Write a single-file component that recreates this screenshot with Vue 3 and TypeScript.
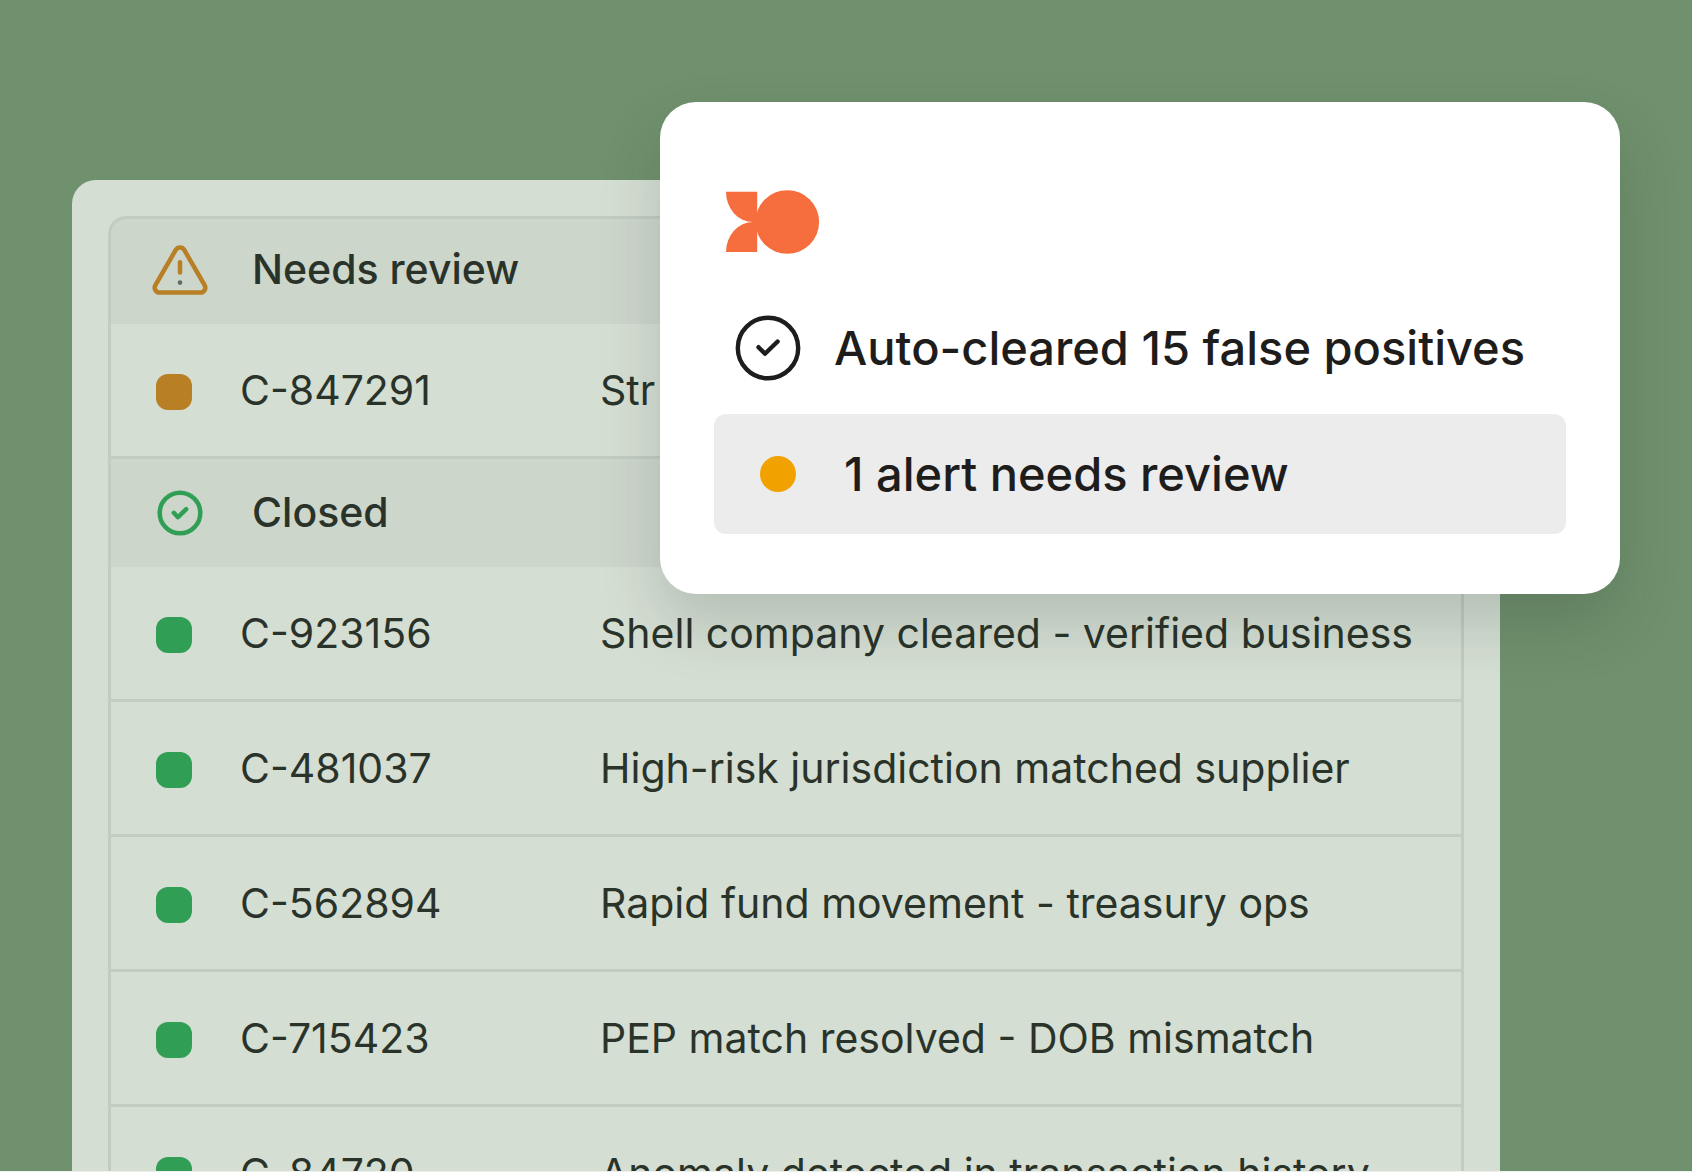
<script setup lang="ts">
type Tone = 'amber' | 'green'

interface CaseRow {
  id: string
  summary: string
}

interface CaseGroup {
  title: string
  tone: Tone
  rows: CaseRow[]
}

const groups: CaseGroup[] = [
  {
    title: 'Needs review',
    tone: 'amber',
    rows: [{ id: 'C-847291', summary: 'Str' }],
  },
  {
    title: 'Closed',
    tone: 'green',
    rows: [
      { id: 'C-923156', summary: 'Shell company cleared - verified business' },
      { id: 'C-481037', summary: 'High-risk jurisdiction matched supplier' },
      { id: 'C-562894', summary: 'Rapid fund movement - treasury ops' },
      { id: 'C-715423', summary: 'PEP match resolved - DOB mismatch' },
      { id: 'C-84720', summary: 'Anomaly detected in transaction history' },
    ],
  },
]
</script>

<template>
  <main class="stage">
    <section class="panel">
      <div class="frame">
        <table class="cases">
          <colgroup>
            <col class="col-status" />
            <col class="col-id" />
            <col />
          </colgroup>
          <tbody v-for="group in groups" :key="group.title" :class="group.tone">
            <tr class="group-row">
              <th colspan="3" scope="rowgroup">
                <div class="group-title">
                  <svg v-if="group.tone === 'amber'" class="group-icon" viewBox="0 0 60 60" aria-hidden="true">
                    <path
                      d="M25.9 9.7a4.8 4.8 0 0 1 8.2 0l20.5 35.5a4.9 4.9 0 0 1-4.2 7.4H9.6a4.9 4.9 0 0 1-4.2-7.4Z"
                    />
                    <path d="M30 22.2v10.4" />
                    <circle class="point" cx="30" cy="42.6" r="2.3" />
                  </svg>
                  <svg v-else class="group-icon" viewBox="0 0 60 60" aria-hidden="true">
                    <circle cx="30" cy="30" r="20.3" />
                    <path d="M23.8 29.8l4.2 4.4 8.2-8" />
                  </svg>
                  <span class="group-name">{{ group.title }}</span>
                </div>
              </th>
            </tr>
            <tr v-for="row in group.rows" :key="row.id" class="case-row">
              <td class="status"><span class="swatch"></span></td>
              <td>{{ row.id }}</td>
              <td>{{ row.summary }}</td>
            </tr>
          </tbody>
        </table>
      </div>
    </section>

    <aside class="card">
      <svg class="logo" viewBox="0 0 96 66" aria-hidden="true">
        <circle cx="62.3" cy="33" r="31.8" />
        <path d="M1 2.8h31.2V33H28A27 30 0 0 1 1 2.8Z" />
        <path d="M1 63h31.2V33H28A27 30 0 0 0 1 63Z" />
      </svg>
      <p class="line">
        <svg class="check" viewBox="0 0 66 66" aria-hidden="true">
          <circle cx="33" cy="33" r="30.2" />
          <path d="M23.5 32.2l6.5 6.6 12.6-12.3" />
        </svg>
        <span>Auto-cleared 15 false positives</span>
      </p>
      <p class="line alert">
        <span class="dot"></span>
        <span>1 alert needs review</span>
      </p>
    </aside>
  </main>
</template>

<style>
body {
  background: #eef0ec;
}
</style>

<style scoped>
.stage {
  position: relative;
  box-sizing: border-box;
  height: calc(100vh - 1px);
  padding: 180px 192px 0 72px;
  overflow: hidden;
  background: #70916d;
  color: #2a3329;
  font-family: Inter, "Liberation Sans", sans-serif;
}

.panel {
  padding: 36px;
  border-radius: 24px 24px 0 0;
  background: #d5ded3;
}

.frame {
  position: relative;
  overflow: hidden;
  border-radius: 18px;
}

.frame::after {
  content: "";
  position: absolute;
  inset: 0;
  border: 3px solid #c2ccc1;
  border-radius: 18px;
  pointer-events: none;
}

.cases {
  width: 100%;
  table-layout: fixed;
  border-spacing: 0;
  font-size: 41px;
  line-height: 48px;
  white-space: nowrap;
}

.col-status {
  width: 132px;
}

.col-id {
  width: 360px;
}

.cases th,
.cases td {
  padding: 0;
  text-align: left;
}

.group-row th {
  height: 108px;
  background: #cdd6cb;
  font-weight: 500;
}

.group-title {
  display: flex;
  align-items: center;
  gap: 42px;
  padding-left: 42px;
}

.group-name {
  padding-bottom: 2px;
}

.group-icon {
  width: 60px;
  height: 60px;
  fill: none;
  stroke: currentColor;
  stroke-width: 4.5;
  stroke-linecap: round;
  stroke-linejoin: round;
}

.amber .group-icon {
  color: #b87f24;
}

.green .group-icon {
  color: #309f55;
}

.group-icon .point {
  fill: #5f6a60;
  stroke: none;
}

.case-row td {
  box-sizing: border-box;
  height: 135px;
  border-bottom: 3px solid #c2ccc1;
}

.case-row .status {
  padding-top: 3px;
  padding-left: 48px;
}

.swatch {
  display: block;
  width: 36px;
  height: 36px;
  border-radius: 12px;
}

.amber .swatch {
  background: #b87f24;
}

.green .swatch {
  background: #309f55;
}

.card {
  position: absolute;
  top: 102px;
  right: 72px;
  left: 660px;
  box-sizing: border-box;
  padding: 87px 54px 60px;
  border-radius: 36px;
  background: #ffffff;
  box-shadow: 0 30px 60px rgba(20, 36, 32, 0.17);
  color: #1e1d1c;
  font-size: 47px;
  font-weight: 500;
  line-height: 60px;
  white-space: nowrap;
}

.logo {
  display: block;
  width: 96px;
  height: 66px;
  margin-left: 11px;
  fill: #f66d3e;
}

.line {
  display: flex;
  align-items: center;
  margin: 0;
}

.line:not(.alert) {
  gap: 33px;
  padding: 60px 21px 33px;
}

.check {
  width: 66px;
  height: 66px;
  fill: none;
  stroke: currentColor;
  stroke-width: 4.4;
  stroke-linecap: round;
  stroke-linejoin: round;
}

.alert {
  gap: 48px;
  padding: 30px 46px;
  border-radius: 12px;
  background: #ececec;
}

.dot {
  width: 36px;
  height: 36px;
  border-radius: 50%;
  background: #f2a200;
}
</style>
